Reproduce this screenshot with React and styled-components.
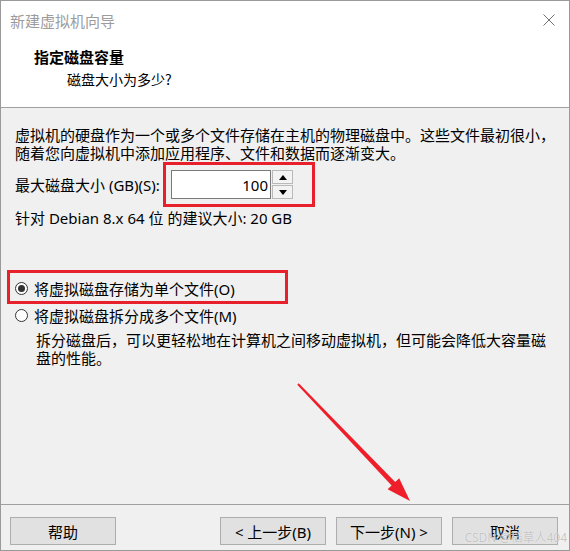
import styled, { createGlobalStyle } from "styled-components";

const GlobalStyle = createGlobalStyle`
  html, body {
    margin: 0;
    padding: 0;
    background: #ffffff;
  }
  body {
    font-family: "Noto Sans", "Noto Sans CJK SC", sans-serif;
    font-size: 15px;
    color: #000;
  }
`;

const Window = styled.div`
  position: relative;
  width: 570px;
  height: 551px;
  box-sizing: border-box;
  border: 1px solid #9a9a9a;
  display: flex;
  flex-direction: column;
  background: #f0f0f0;
  overflow: hidden;
`;

const Header = styled.div`
  background: #ffffff;
  height: 107px;
  box-sizing: border-box;
  border-bottom: 1px solid #a0a0a0;
`;

const TitleBar = styled.div`
  height: 38px;
  display: flex;
  align-items: center;
  justify-content: space-between;
  padding: 0 14px 0 9px;
`;

const Title = styled.span`
  font-family: "Noto Sans CJK SC", sans-serif;
  font-size: 15px;
  color: #9c9c9c;
`;

const Heading = styled.div`
  margin-top: 7px;
  padding-left: 33px;
  font-family: "Noto Sans CJK SC", sans-serif;
  font-size: 15px;
  font-weight: 700;
  line-height: 22px;
`;

const SubHeading = styled.div`
  padding-left: 66px;
  font-family: "Noto Sans CJK SC", sans-serif;
  font-size: 14px;
  line-height: 22px;
`;

const Body = styled.div`
  flex: 1;
  padding: 18px 14px 0 14px;
`;

const Text = styled.div`
  line-height: 18px;
  margin-top: ${(p) => p.$top || 0}px;
  padding-left: ${(p) => p.$indent || 0}px;
  white-space: nowrap;
`;

const SizeRow = styled.div`
  position: relative;
  margin-top: 8px;
  display: flex;
  align-items: center;
  height: 29px;
`;

const SizeLabel = styled.span`
  width: 156px;
  white-space: nowrap;
`;

const NumberBox = styled.div`
  width: 100px;
  height: 29px;
  box-sizing: border-box;
  background: #fff;
  border: 1px solid #7a7a7a;
  display: flex;
  align-items: center;
  justify-content: flex-end;
  padding-right: 2px;
  font-size: 15px;
`;

const Spinner = styled.div`
  margin-left: 1px;
  width: 21px;
  height: 29px;
  display: flex;
  flex-direction: column;
  gap: 1px;
`;

const SpinButton = styled.div`
  flex: 1;
  box-sizing: border-box;
  border: 1px solid #b9b9b9;
  background: #f3f3f3;
  display: flex;
  align-items: center;
  justify-content: center;
`;

const Triangle = styled.span`
  width: 0;
  height: 0;
  border-left: 4px solid transparent;
  border-right: 4px solid transparent;
  ${(p) =>
    p.$down ? "border-top: 5px solid #000;" : "border-bottom: 5px solid #000;"}
`;

const Highlight = styled.div`
  position: absolute;
  left: ${(p) => p.$left}px;
  top: ${(p) => p.$top}px;
  width: ${(p) => p.$width}px;
  height: ${(p) => p.$height}px;
  box-sizing: border-box;
  border: 3px solid #e8202c;
  pointer-events: none;
`;

const RadioRow = styled.div`
  position: relative;
  height: 26px;
  display: flex;
  align-items: center;
  gap: 6px;
  margin-top: ${(p) => p.$top || 0}px;
  white-space: nowrap;
`;

const RadioCircle = styled.span`
  width: 13px;
  height: 13px;
  box-sizing: border-box;
  border-radius: 50%;
  border: 1px solid #333;
  background: #fff;
  display: flex;
  align-items: center;
  justify-content: center;
  &::after {
    content: "";
    width: 7px;
    height: 7px;
    border-radius: 50%;
    background: ${(p) => (p.$checked ? "#333" : "transparent")};
  }
`;

const Footer = styled.div`
  border-top: 1px solid #a0a0a0;
  height: 46px;
  box-sizing: border-box;
  display: flex;
  align-items: flex-start;
  padding: 12px 11px 0 9px;
  gap: 10px;
`;

const Spacer = styled.div`
  flex: 1;
`;

const Button = styled.div`
  width: 106px;
  height: 28px;
  box-sizing: border-box;
  background: #e1e1e1;
  border: 1px solid #adadad;
  display: flex;
  align-items: center;
  justify-content: center;
  font-size: 15px;
  white-space: nowrap;
`;

const Overlay = styled.svg`
  position: absolute;
  left: 0;
  top: 0;
  pointer-events: none;
`;

const Watermark = styled.span`
  position: absolute;
  right: 2px;
  bottom: 4px;
  font-size: 12px;
  color: rgba(190, 190, 190, 0.9);
  text-shadow: 0 0 1px #fff;
  pointer-events: none;
`;

const App = () => {
  return (
    <>
      <GlobalStyle />
      <Window>
        <Header>
          <TitleBar>
            <Title>新建虚拟机向导</Title>
            <svg width="12" height="12" viewBox="0 0 12 12">
              <path d="M0.5 0.5 L11.5 11.5 M11.5 0.5 L0.5 11.5" stroke="#707070" strokeWidth="1" />
            </svg>
          </TitleBar>
          <Heading>指定磁盘容量</Heading>
          <SubHeading>磁盘大小为多少?</SubHeading>
        </Header>
        <Body>
          <Text>虚拟机的硬盘作为一个或多个文件存储在主机的物理磁盘中。这些文件最初很小，</Text>
          <Text>随着您向虚拟机中添加应用程序、文件和数据而逐渐变大。</Text>
          <SizeRow>
            <SizeLabel>最大磁盘大小 (GB)(S):</SizeLabel>
            <NumberBox>100</NumberBox>
            <Spinner>
              <SpinButton>
                <Triangle />
              </SpinButton>
              <SpinButton>
                <Triangle $down />
              </SpinButton>
            </Spinner>
            <Highlight $left={148} $top={-8} $width={152} $height={45} />
          </SizeRow>
          <Text $top={10}>针对 Debian 8.x 64 位 的建议大小: 20 GB</Text>
          <RadioRow $top={48}>
            <RadioCircle $checked />
            <span>将虚拟磁盘存储为单个文件(O)</span>
            <Highlight $left={-8} $top={-5} $width={281} $height={34} />
          </RadioRow>
          <RadioRow $top={1}>
            <RadioCircle />
            <span>将虚拟磁盘拆分成多个文件(M)</span>
          </RadioRow>
          <Text $top={3} $indent={21}>
            拆分磁盘后，可以更轻松地在计算机之间移动虚拟机，但可能会降低大容量磁
          </Text>
          <Text $indent={21}>盘的性能。</Text>
        </Body>
        <Footer>
          <Button>帮助</Button>
          <Spacer />
          <Button>&lt; 上一步(B)</Button>
          <Button>下一步(N) &gt;</Button>
          <Button>取消</Button>
        </Footer>
        <Overlay width="570" height="551" viewBox="0 0 570 551">
          <polygon
            points="296.3,383.7 390.6,484.4 386.6,488.2 409,500 398.2,477.2 394.2,481.0 297.7,382.3"
            fill="#ee1f2b"
          />
        </Overlay>
        <Watermark>CSDN @稻草人404</Watermark>
      </Window>
    </>
  );
};

export default App;
